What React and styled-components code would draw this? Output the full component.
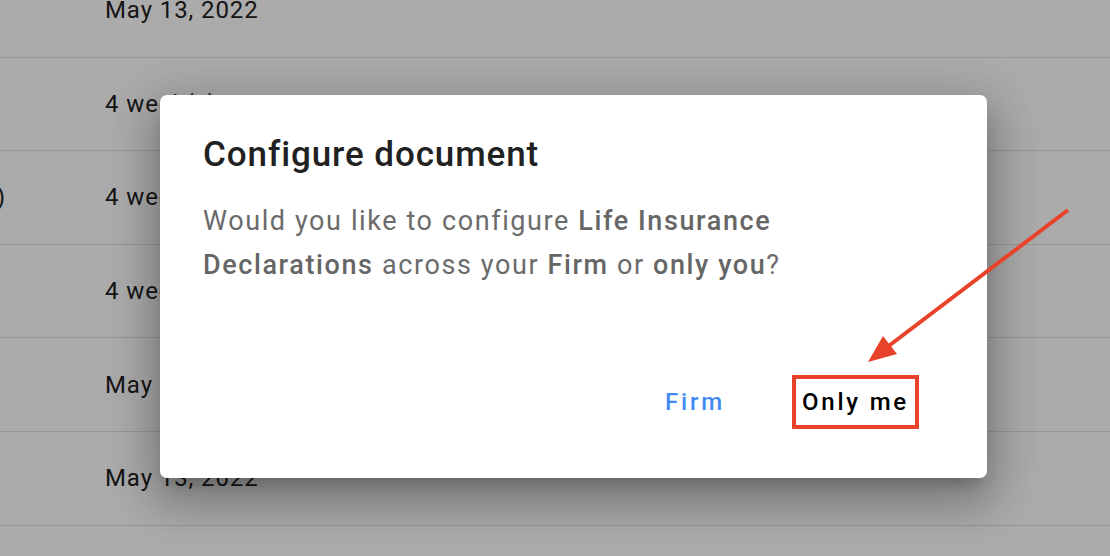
import React from "react";
import styled, { createGlobalStyle } from "styled-components";

const GlobalStyle = createGlobalStyle`
  html, body {
    margin: 0;
    padding: 0;
    width: 1110px;
    height: 556px;
    overflow: hidden;
    background: #fff;
    font-family: Roboto, "Helvetica Neue", Arial, sans-serif;
  }
`;

const Page = styled.div`
  position: relative;
  width: 1110px;
  height: 556px;
  overflow: hidden;
  background: #fff;
`;

const List = styled.div`
  display: flex;
  flex-direction: column;
  margin-top: -36px;
`;

const Row = styled.div`
  display: flex;
  align-items: center;
  height: 93.6px;
  box-sizing: border-box;
  border-bottom: 1px solid #e2e2e2;
  font-size: 24px;
  letter-spacing: 0.9px;
  color: #222;
`;

const NameCell = styled.div`
  display: flex;
  justify-content: flex-end;
  width: 105px;
  padding-right: 99px;
  box-sizing: border-box;
  white-space: nowrap;
`;

const DateCell = styled.div`
  white-space: nowrap;
`;

const Backdrop = styled.div`
  position: absolute;
  inset: 0;
  background: rgba(0, 0, 0, 0.33);
  display: flex;
  align-items: flex-start;
  padding: 95px 0 0 160px;
`;

const Dialog = styled.div`
  width: 827px;
  height: 383px;
  box-sizing: border-box;
  background: #fff;
  border-radius: 7px;
  padding: 0 43px;
  display: flex;
  flex-direction: column;
  box-shadow: 0 11px 15px -7px rgba(0, 0, 0, 0.22),
    0 24px 44px 6px rgba(0, 0, 0, 0.18), 0 9px 50px 10px rgba(0, 0, 0, 0.14);
`;

const Title = styled.h2`
  margin: 40px 0 0;
  font-size: 35px;
  line-height: 40px;
  font-weight: 500;
  color: #212121;
  letter-spacing: 0.9px;
`;

const Body = styled.p`
  margin: 24px 0 0;
  font-size: 27px;
  line-height: 44px;
  color: #6b6b6b;
  letter-spacing: 1.6px;
  max-width: 640px;

  b {
    font-weight: 500;
    color: #666;
  }
`;

const Actions = styled.div`
  margin-top: auto;
  padding: 0 68px 49px 0;
  margin-right: -43px;
  display: flex;
  justify-content: flex-end;
  align-items: center;
  gap: 57px;
`;

const Button = styled.button`
  height: 54px;
  box-sizing: border-box;
  padding: 0 ${(p) => (p.$highlighted ? "6px" : "10px")};
  background: none;
  border: ${(p) => (p.$highlighted ? "4px solid #e8432a" : "none")};
  font-family: Roboto, "Helvetica Neue", Arial, sans-serif;
  font-size: 24px;
  font-weight: 500;
  letter-spacing: 2.8px;
  color: ${(p) => (p.$primary ? "#4289f6" : "#000")};
  cursor: pointer;
`;

const Annotation = styled.svg`
  position: absolute;
  inset: 0;
  pointer-events: none;
`;

const rows = [
  { name: "", date: "May 13, 2022" },
  { name: "", date: "4 week(s) ago" },
  { name: "Life Insurance Declarations (Copy)", date: "4 week(s) ago" },
  { name: "", date: "4 week(s) ago" },
  { name: "", date: "May 13, 2022" },
  { name: "", date: "May 13, 2022" },
];

export default function App() {
  return (
    <Page>
      <GlobalStyle />
      <List>
        {rows.map((r, i) => (
          <Row key={i}>
            <NameCell>{r.name}</NameCell>
            <DateCell>{r.date}</DateCell>
          </Row>
        ))}
      </List>
      <Backdrop>
        <Dialog>
          <Title>Configure document</Title>
          <Body>
            Would you like to configure <b>Life Insurance Declarations</b>{" "}
            across your <b>Firm</b> or <b>only you</b>?
          </Body>
          <Actions>
            <Button $primary>Firm</Button>
            <Button $highlighted>Only me</Button>
          </Actions>
        </Dialog>
      </Backdrop>
      <Annotation width="1110" height="556" viewBox="0 0 1110 556">
        <line
          x1="1068"
          y1="210"
          x2="886"
          y2="348"
          stroke="#e8432a"
          strokeWidth="4"
        />
        <polygon points="868,362 883,336 897,354" fill="#e8432a" />
      </Annotation>
    </Page>
  );
}
